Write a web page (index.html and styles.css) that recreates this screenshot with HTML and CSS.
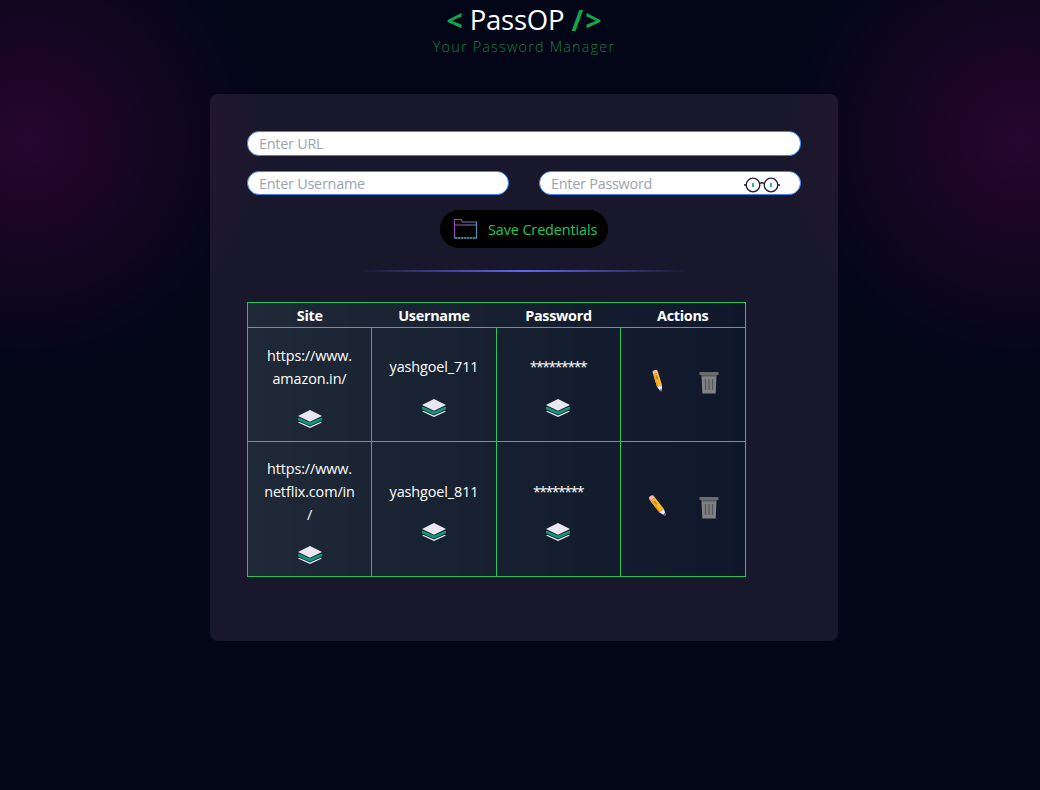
FILE: index.html
```html
<!DOCTYPE html>
<html lang="en">
<head>
<meta charset="utf-8">
<title>PassOP</title>
<link rel="stylesheet" href="styles.css">
</head>
<body>
<svg class="defs" width="0" height="0">
  <symbol id="layers" viewBox="0 0 26 20">
    <path d="M1 13.500 13 8l12 5.500L13 19z" fill="#ece6f2"/>
    <path d="M1 10.300 13 5l12 5.300v2L13 17.600 1 12.300z" fill="#141c2c"/>
    <path d="M1 9 13 4.500 25 9v2.300L13 16.800 1 11.300z" fill="#109579"/>
    <path d="M1 7 13 3l12 4v1.300l-12 5.300L1 8.300z" fill="#141c2c"/>
    <path d="M1 6.900 13 1l12 5.900L13 12.800z" fill="#ece6f2"/>
  </symbol>
  <symbol id="trash" viewBox="0 0 20 24">
    <path d="M2.500 4h15l-.8 18.500H3.300z" fill="#818181"/>
    <path d="M.5 1h19v3h-19z" fill="#6c6c6d"/>
    <path d="M2.500 4h15v1.500h-15z" fill="#555b62"/>
    <path d="M6.500 8v11M10 8v11M13.500 8v11" stroke="#54575d" stroke-width="1.300"/>
  </symbol>
  <symbol id="pencil" viewBox="0 0 8 24">
    <path d="M1.500 4.500V3Q1.500 1 4 1t2.500 2v1.500z" fill="#f5b5a8"/>
    <path d="M1.500 4.500h5V17h-5z" fill="#fdbb2c"/>
    <path d="M1.500 4.500H3V17H1.500z" fill="#f59f16"/>
    <path d="M4 6.500v4" stroke="#a98043" stroke-width="1.200"/>
    <path d="M1.500 17h5L4.700 22H3.300z" fill="#eee8f5"/>
    <path d="M3 20.500h2L4 23.500z" fill="#5150a8"/>
  </symbol>
</svg>
<header class="header">
  <h1 class="logo"><span class="mark">&lt;</span><span class="name">PassOP</span><span class="mark mark-close">/&gt;</span></h1>
  <p class="tagline">Your Password Manager</p>
</header>
<main class="card">
  <form class="form">
    <input class="field field-url" placeholder="Enter URL">
    <div class="pair">
      <input class="field" placeholder="Enter Username">
      <div class="password">
        <input class="field" placeholder="Enter Password">
        <svg class="glasses" viewBox="0 0 38 18" fill="none">
          <g stroke="#211d3b" stroke-width="1.300"><circle cx="10" cy="9" r="6.800"/><circle cx="28" cy="9" r="6.800"/><path d="M16.500 7.500q2.500-1.500 5 0M3.300 9H1M34.700 9H37"/></g>
          <path d="M10 7v4M28 7v4" stroke="#18ad8b" stroke-width="1.800"/>
        </svg>
      </div>
    </div>
    <button class="save" type="button">
      <svg class="folder" viewBox="0 0 26 22" fill="none">
        <defs><linearGradient id="fg" x1="0" y1="2" x2="26" y2="16" gradientUnits="userSpaceOnUse"><stop stop-color="#a23bb0"/><stop offset=".55" stop-color="#7d78bd"/><stop offset="1" stop-color="#38a0a8"/></linearGradient></defs>
        <path d="M1.500 20V1.500H8l1.500 2.500h14V20M1.500 7h22" stroke="url(#fg)" stroke-width="1.200"/>
        <path d="M1 20h23" stroke="#47798c"/>
        <path d="M2 20h22" stroke="#6ab0c4" stroke-dasharray="2 1"/>
      </svg>
      <span class="save-label">Save Credentials</span>
    </button>
  </form>
  <div class="divider"></div>
  <table class="table">
    <colgroup><col class="col-site"><col class="col-user"><col class="col-pass"><col></colgroup>
    <thead>
      <tr><th>Site</th><th>Username</th><th>Password</th><th>Actions</th></tr>
    </thead>
    <tbody>
      <tr class="row-a">
        <td><div class="cell"><span>https://www.<br>amazon.in/</span><svg class="copy"><use href="#layers"/></svg></div></td>
        <td><div class="cell cell-user"><span>yashgoel_711</span><svg class="copy"><use href="#layers"/></svg></div></td>
        <td><div class="cell cell-user cell-pass"><span class="stars">*********</span><svg class="copy"><use href="#layers"/></svg></div></td>
        <td><div class="actions"><svg class="pencil tilt-small"><use href="#pencil"/></svg><svg class="trash"><use href="#trash"/></svg></div></td>
      </tr>
      <tr class="row-b">
        <td><div class="cell"><span>https://www.<br>netflix.com/in<br>/</span><svg class="copy"><use href="#layers"/></svg></div></td>
        <td><div class="cell"><span>yashgoel_811</span><svg class="copy"><use href="#layers"/></svg></div></td>
        <td><div class="cell cell-pass"><span class="stars">********</span><svg class="copy"><use href="#layers"/></svg></div></td>
        <td><div class="actions"><svg class="pencil tilt-large"><use href="#pencil"/></svg><svg class="trash"><use href="#trash"/></svg></div></td>
      </tr>
    </tbody>
  </table>
</main>
</body>
</html>
```
FILE: styles.css
```css
* { box-sizing: border-box; margin: 0; padding: 0; }
body {
  height: 790px;
  overflow: hidden;
  padding-left: 8px;
  background:
    radial-gradient(circle 237px at 29px 140px, rgba(255,0,182,.15), rgba(255,0,182,0)),
    radial-gradient(circle 237px at 1019px 140px, rgba(255,0,182,.15), rgba(255,0,182,0)),
    #020617;
  color: #fff;
  font-family: "Open Sans", "Noto Sans", sans-serif;
  font-size: 14.4px;
  line-height: 23px;
  letter-spacing: -.2px;
}
.defs { display: block; height: 0; }
.header { height: 94px; padding-top: 3px; text-align: center; }
.logo {
  display: flex;
  justify-content: center;
  gap: 7px;
  padding-left: 2px;
  font-size: 27.5px;
  line-height: 34px;
  font-weight: 400;
  letter-spacing: -.2px;
}
.mark { color: #16a34a; font-size: 28.5px; font-weight: 700; }
.mark-close { letter-spacing: 2px; }
.tagline { font-size: 14.4px; line-height: 20px; font-weight: 300; letter-spacing: 1.2px; color: #15803d; }
.card {
  width: 628px;
  height: 547px;
  margin: 0 auto;
  padding: 37px;
  border-radius: 8px;
  background: rgba(162,119,160,.15);
}
.form { display: flex; flex-direction: column; align-items: center; }
.field {
  display: block;
  width: 100%;
  height: 24px;
  padding: 0 11px;
  border: 1px solid #3b82f6;
  border-radius: 12px;
  background: #fff;
  font: inherit;
  letter-spacing: -.24px;
}
.field::placeholder { color: #9ca3af; opacity: 1; }
.field-url { height: 25px; }
.pair { display: grid; grid-template-columns: 262px 262px; gap: 30px; margin-top: 15px; }
.password { position: relative; }
.glasses { position: absolute; right: 20px; top: 5px; width: 38px; height: 18px; }
.save {
  display: flex;
  align-items: center;
  gap: 9px;
  width: 168px;
  height: 38px;
  margin-top: 15px;
  padding-left: 13px;
  border: 0;
  border-radius: 19px;
  background: #000;
  color: #22c55e;
  font: inherit;
  letter-spacing: -.1px;
  white-space: nowrap;
}
.folder { flex: none; width: 26px; height: 22px; }
.divider { width: 332px; height: 2px; margin: 22px auto 30px; background: linear-gradient(90deg, transparent, #6366f1, transparent); }
.table {
  width: 499px;
  table-layout: fixed;
  border-collapse: collapse;
  border: 1px solid #22c55e;
  background: linear-gradient(90deg, #1f2937, #0f172a);
  text-align: center;
}
.col-site { width: 124px; }
.col-user { width: 125px; }
.col-pass { width: 124px; }
.table th { height: 25px; font-weight: 700; letter-spacing: -.3px; }
.table td { border: 1px solid #22c55e; vertical-align: middle; }
.row-a { height: 114px; }
.row-b { height: 135px; }
.cell { display: flex; flex-direction: column; align-items: center; gap: 19px; padding-top: 4px; letter-spacing: -.1px; }
.cell-user { gap: 20px; padding-top: 3px; }
.cell-pass { padding-right: 1px; }
.copy { width: 26px; height: 20px; }
.stars { font-size: 14px; letter-spacing: -1.450px; line-height: 23px; }
.actions { display: flex; align-items: center; justify-content: center; gap: 37px; padding: 0 0 3px 6px; }
.pencil { width: 8px; height: 24px; margin-top: -4px; overflow: visible; }
.tilt-small { transform: rotate(-17deg) scale(1.050); }
.tilt-large { transform: rotate(-38deg) scale(1.150); }
.trash { width: 20px; height: 24px; }
```
